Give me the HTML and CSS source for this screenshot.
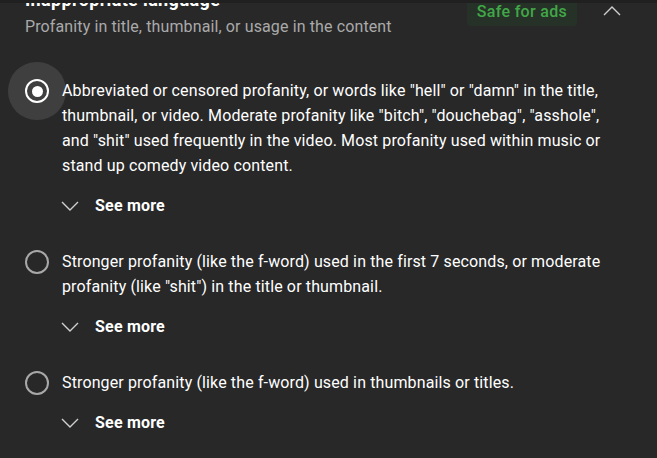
FILE: index.html
```html
<!DOCTYPE html>
<html lang="en">
<head>
<meta charset="utf-8">
<title>Inappropriate language</title>
<link rel="stylesheet" href="styles.css">
</head>
<body>
<div class="topband"></div>
<main class="section">
  <header class="head">
    <div class="head-text">
      <h2 class="title">Inappropriate language</h2>
      <p class="subtitle">Profanity in title, thumbnail, or usage in the content</p>
    </div>
    <div class="head-side">
      <span class="badge">Safe for ads</span>
      <svg class="chev-up" width="18" height="10" viewBox="0 0 18 10"><polyline points="1,9 9,1 17,9" fill="none" stroke="#cfcfcf" stroke-width="1.4"/></svg>
    </div>
  </header>

  <div class="options">
    <div class="option">
      <span class="radio checked"><span class="dot"></span></span>
      <div class="opt-body">
        <p class="opt-text">Abbreviated or censored profanity, or words like "hell" or "damn" in the title, thumbnail, or video. Moderate profanity like "bitch", "douchebag", "asshole", and "shit" used frequently in the video. Most profanity used within music or stand up comedy video content.</p>
        <div class="see-more">
          <svg class="chev-down" width="18" height="10" viewBox="0 0 18 10"><polyline points="1,1 9,9 17,1" fill="none" stroke="#cfcfcf" stroke-width="1.4"/></svg>
          <span>See more</span>
        </div>
      </div>
    </div>

    <div class="option">
      <span class="radio"></span>
      <div class="opt-body">
        <p class="opt-text">Stronger profanity (like the f-word) used in the first 7 seconds, or moderate profanity (like "shit") in the title or thumbnail.</p>
        <div class="see-more">
          <svg class="chev-down" width="18" height="10" viewBox="0 0 18 10"><polyline points="1,1 9,9 17,1" fill="none" stroke="#cfcfcf" stroke-width="1.4"/></svg>
          <span>See more</span>
        </div>
      </div>
    </div>

    <div class="option">
      <span class="radio"></span>
      <div class="opt-body">
        <p class="opt-text">Stronger profanity (like the f-word) used in thumbnails or titles.</p>
        <div class="see-more">
          <svg class="chev-down" width="18" height="10" viewBox="0 0 18 10"><polyline points="1,1 9,9 17,1" fill="none" stroke="#cfcfcf" stroke-width="1.4"/></svg>
          <span>See more</span>
        </div>
      </div>
    </div>
  </div>
</main>
</body>
</html>
```

FILE: styles.css
```css
html, body {
  margin: 0;
  padding: 0;
  background: #282828;
  color: #ffffff;
  font-family: Roboto, "Liberation Sans", Arial, sans-serif;
  overflow: hidden;
  height: 458px;
}

.topband {
  position: fixed;
  top: 0;
  left: 0;
  right: 0;
  height: 3px;
  background: #202020;
  z-index: 5;
}

.section {
  padding: 0 0 0 25px;
}

.head {
  display: flex;
  align-items: flex-start;
  margin-top: -12px;
  padding-right: 36px;
}

.head-text {
  flex: 1;
}

.title {
  margin: 0;
  font-size: 18px;
  line-height: 24px;
  font-weight: 700;
  letter-spacing: 0.35px;
  color: #ffffff;
}

.subtitle {
  margin: 3px 0 0;
  font-size: 16px;
  line-height: 24px;
  letter-spacing: 0.12px;
  color: #aaaaaa;
}

.head-side {
  display: flex;
  align-items: flex-start;
  margin-top: 9px;
}

.badge {
  display: block;
  padding: 3px 10px 2px;
  line-height: 24px;
  font-size: 16px;
  font-weight: 500;
  letter-spacing: 0.3px;
  color: #41a747;
  background: #263227;
  border-radius: 4px;
}

.chev-up {
  display: block;
  margin: 9px 0 0 26px;
}

.options {
  display: flex;
  flex-direction: column;
  gap: 31px;
  margin-top: 39px;
  padding-right: 30px;
}

.option {
  display: flex;
  align-items: flex-start;
}

.radio {
  flex: none;
  width: 20px;
  height: 20px;
  margin-top: 1px;
  margin-right: 13px;
  border: 2px solid #a8a8a8;
  border-radius: 50%;
  display: flex;
  align-items: center;
  justify-content: center;
}

.radio.checked {
  border-color: #ffffff;
  background: #3f3f3f;
  box-shadow: 0 0 0 17px #3f3f3f;
}

.dot {
  width: 11px;
  height: 11px;
  border-radius: 50%;
  background: #ffffff;
}

.opt-body {
  flex: 1;
}

.opt-text {
  margin: 0;
  font-size: 16px;
  line-height: 25px;
  letter-spacing: 0.13px;
  color: #ffffff;
}

.see-more {
  display: flex;
  align-items: center;
  gap: 16px;
  margin-top: 16px;
  height: 24px;
  font-size: 16px;
  font-weight: 700;
  line-height: 24px;
  letter-spacing: 0.2px;
}

.chev-down {
  display: block;
  margin-left: -1px;
}
```
